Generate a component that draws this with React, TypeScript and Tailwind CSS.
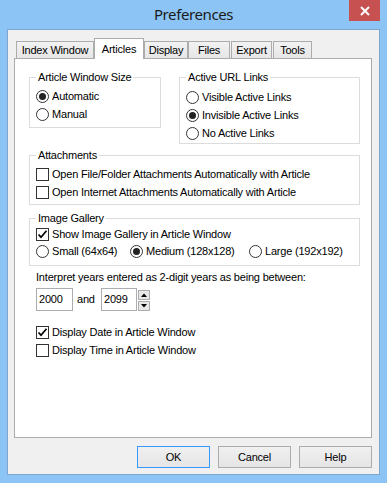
import { useState } from 'react';

function Radio({ checked }: { checked?: boolean }) {
  return (
    <span className="flex h-[13px] w-[13px] shrink-0 items-center justify-center rounded-full border border-[#333] bg-white">
      {checked && <span className="h-[7px] w-[7px] rounded-full bg-[#222]" />}
    </span>
  );
}

function Check({ checked }: { checked?: boolean }) {
  return (
    <span className="flex h-[13px] w-[13px] shrink-0 items-center justify-center border border-[#333] bg-white">
      {checked && (
        <svg width="11" height="11" viewBox="0 0 11 11">
          <path d="M1.5 5.5 L4 8.2 L9.5 1.8" fill="none" stroke="#000" strokeWidth="1.7" />
        </svg>
      )}
    </span>
  );
}

function Option({ label, radio, checked, rowClass }: { label: string; radio?: boolean; checked?: boolean; rowClass: string }) {
  return (
    <div className={`flex items-center gap-[3px] ${rowClass}`}>
      {radio ? <Radio checked={checked} /> : <Check checked={checked} />}
      <span className="whitespace-nowrap">{label}</span>
    </div>
  );
}

const tabs = [
  { label: 'Index Window', cls: 'w-[78px]' },
  { label: 'Articles', cls: 'w-[50px]', active: true },
  { label: 'Display', cls: 'w-[44px]' },
  { label: 'Files', cls: 'w-[42px]' },
  { label: 'Export', cls: 'w-[41px] ml-[1px]' },
  { label: 'Tools', cls: 'w-[39px] ml-[1px]' },
];

export default function App() {
  const [start] = useState('2000');
  const [end] = useState('2099');

  return (
    <div className="relative flex h-[483px] w-[387px] flex-col bg-[#8cc5f5] font-['Liberation_Sans',Arial,sans-serif] text-[11px] tracking-[-0.2px] text-black">
      {/* title bar */}
      <div className="flex h-[29px] shrink-0 items-center justify-center pb-[1px] font-['Noto_Sans',sans-serif] text-[15px] tracking-[-0.4px] text-[#1a1a1a]">
        Preferences
      </div>
      <div className="absolute right-[7px] top-0 flex h-[21px] w-[31px] items-center justify-center bg-[#c75050]">
        <svg width="10" height="10" viewBox="0 0 10 10">
          <path d="M1 1 L9 9 M9 1 L1 9" stroke="#fff" strokeWidth="2" />
        </svg>
      </div>

      {/* dialog body */}
      <div className="ml-[7px] flex h-[446px] w-[373px] flex-col border border-[#7fa6cf] bg-[#f0f0f0] pt-[8px]">
        <div className="ml-[6px] flex flex-col">
          {/* tabs */}
          <div className="flex h-[20px] items-end pl-[2px]">
            {tabs.map((t) =>
              t.active ? (
                <div
                  key={t.label}
                  className={`relative z-10 -mb-[1px] flex h-[21px] items-center justify-center border-l border-r border-t border-[#acacac] bg-white ${t.cls}`}
                >
                  {t.label}
                </div>
              ) : (
                <div
                  key={t.label}
                  className={`flex h-[17px] items-center justify-center border-l border-r border-t border-[#acacac] bg-gradient-to-b from-[#f2f2f2] to-[#e6e6e6] ${t.cls}`}
                >
                  {t.label}
                </div>
              )
            )}
          </div>

          {/* panel */}
          <div className="flex h-[380px] w-[358px] flex-col border border-[#acacac] bg-white pl-[14px] pt-[12px]">
            <div className="flex items-start">
              <fieldset className="w-[132px] border border-[#dcdcdc] px-[6px] pb-[4px] pt-[3px]">
                <legend className="px-[2px] leading-[13px]">Article Window Size</legend>
                <Option radio checked label="Automatic" rowClass="h-[18px]" />
                <Option radio label="Manual" rowClass="h-[18px]" />
              </fieldset>
              <fieldset className="ml-[18px] w-[181px] border border-[#dcdcdc] px-[6px] pb-[1px] pt-[4px]">
                <legend className="px-[2px] leading-[13px]">Active URL Links</legend>
                <Option radio label="Visible Active Links" rowClass="h-[18px]" />
                <Option radio checked label="Invisible Active Links" rowClass="h-[18px]" />
                <Option radio label="No Active Links" rowClass="h-[18px]" />
              </fieldset>
            </div>

            <fieldset className="mt-[5px] w-[331px] border border-[#dcdcdc] px-[6px] pb-[3px] pt-[3px]">
              <legend className="px-[2px] leading-[13px]">Attachments</legend>
              <Option label="Open File/Folder Attachments Automatically with Article" rowClass="h-[18px]" />
              <Option label="Open Internet Attachments Automatically with Article" rowClass="h-[18px]" />
            </fieldset>

            <fieldset className="mt-[7px] w-[331px] border border-[#dcdcdc] px-[6px] pb-[5px] pt-[1px]">
              <legend className="px-[2px] leading-[13px]">Image Gallery</legend>
              <Option checked label="Show Image Gallery in Article Window" rowClass="h-[17px]" />
              <div className="flex h-[17px] items-center">
                <Option radio label="Small (64x64)" rowClass="w-[94px]" />
                <Option radio checked label="Medium (128x128)" rowClass="w-[119px]" />
                <Option radio label="Large (192x192)" rowClass="" />
              </div>
            </fieldset>

            <div className="mt-[5px] pl-[7px] leading-[13px]">
              Interpret years entered as 2-digit years as being between:
            </div>

            <div className="mt-[4px] flex h-[23px] items-start pl-[7px]">
              <div className="flex h-[23px] w-[37px] items-center border border-[#abadb3] bg-white pl-[2px]">{start}</div>
              <span className="ml-[4px] flex h-[23px] w-[24px] items-center">and</span>
              <div className="flex h-[23px] w-[36px] items-center border border-[#abadb3] bg-white pl-[2px]">{end}</div>
              <div className="ml-[1px] mt-[2px] flex flex-col gap-[1px]">
                <div className="flex h-[10px] w-[12px] items-center justify-center border border-[#acacac] bg-[#e8e8e8]">
                  <svg width="6" height="4" viewBox="0 0 6 4">
                    <path d="M0 4 L3 0.5 L6 4 Z" fill="#000" />
                  </svg>
                </div>
                <div className="flex h-[10px] w-[12px] items-center justify-center border border-[#acacac] bg-[#e8e8e8]">
                  <svg width="6" height="4" viewBox="0 0 6 4">
                    <path d="M0 0 L3 3.5 L6 0 Z" fill="#000" />
                  </svg>
                </div>
              </div>
            </div>

            <div className="mt-[12px] pl-[7px]">
              <Option checked label="Display Date in Article Window" rowClass="h-[18px]" />
              <Option label="Display Time in Article Window" rowClass="h-[18px]" />
            </div>
          </div>
        </div>

        {/* buttons */}
        <div className="mt-[8px] flex justify-end gap-[8px] pr-[7px]">
          <button className="flex h-[22px] w-[73px] items-center justify-center border border-[#3399ff] bg-gradient-to-b from-[#f0f0f0] to-[#e5e5e5]">
            OK
          </button>
          <button className="flex h-[22px] w-[73px] items-center justify-center border border-[#acacac] bg-gradient-to-b from-[#f0f0f0] to-[#e5e5e5]">
            Cancel
          </button>
          <button className="flex h-[22px] w-[73px] items-center justify-center border border-[#acacac] bg-gradient-to-b from-[#f0f0f0] to-[#e5e5e5]">
            Help
          </button>
        </div>
      </div>
    </div>
  );
}
